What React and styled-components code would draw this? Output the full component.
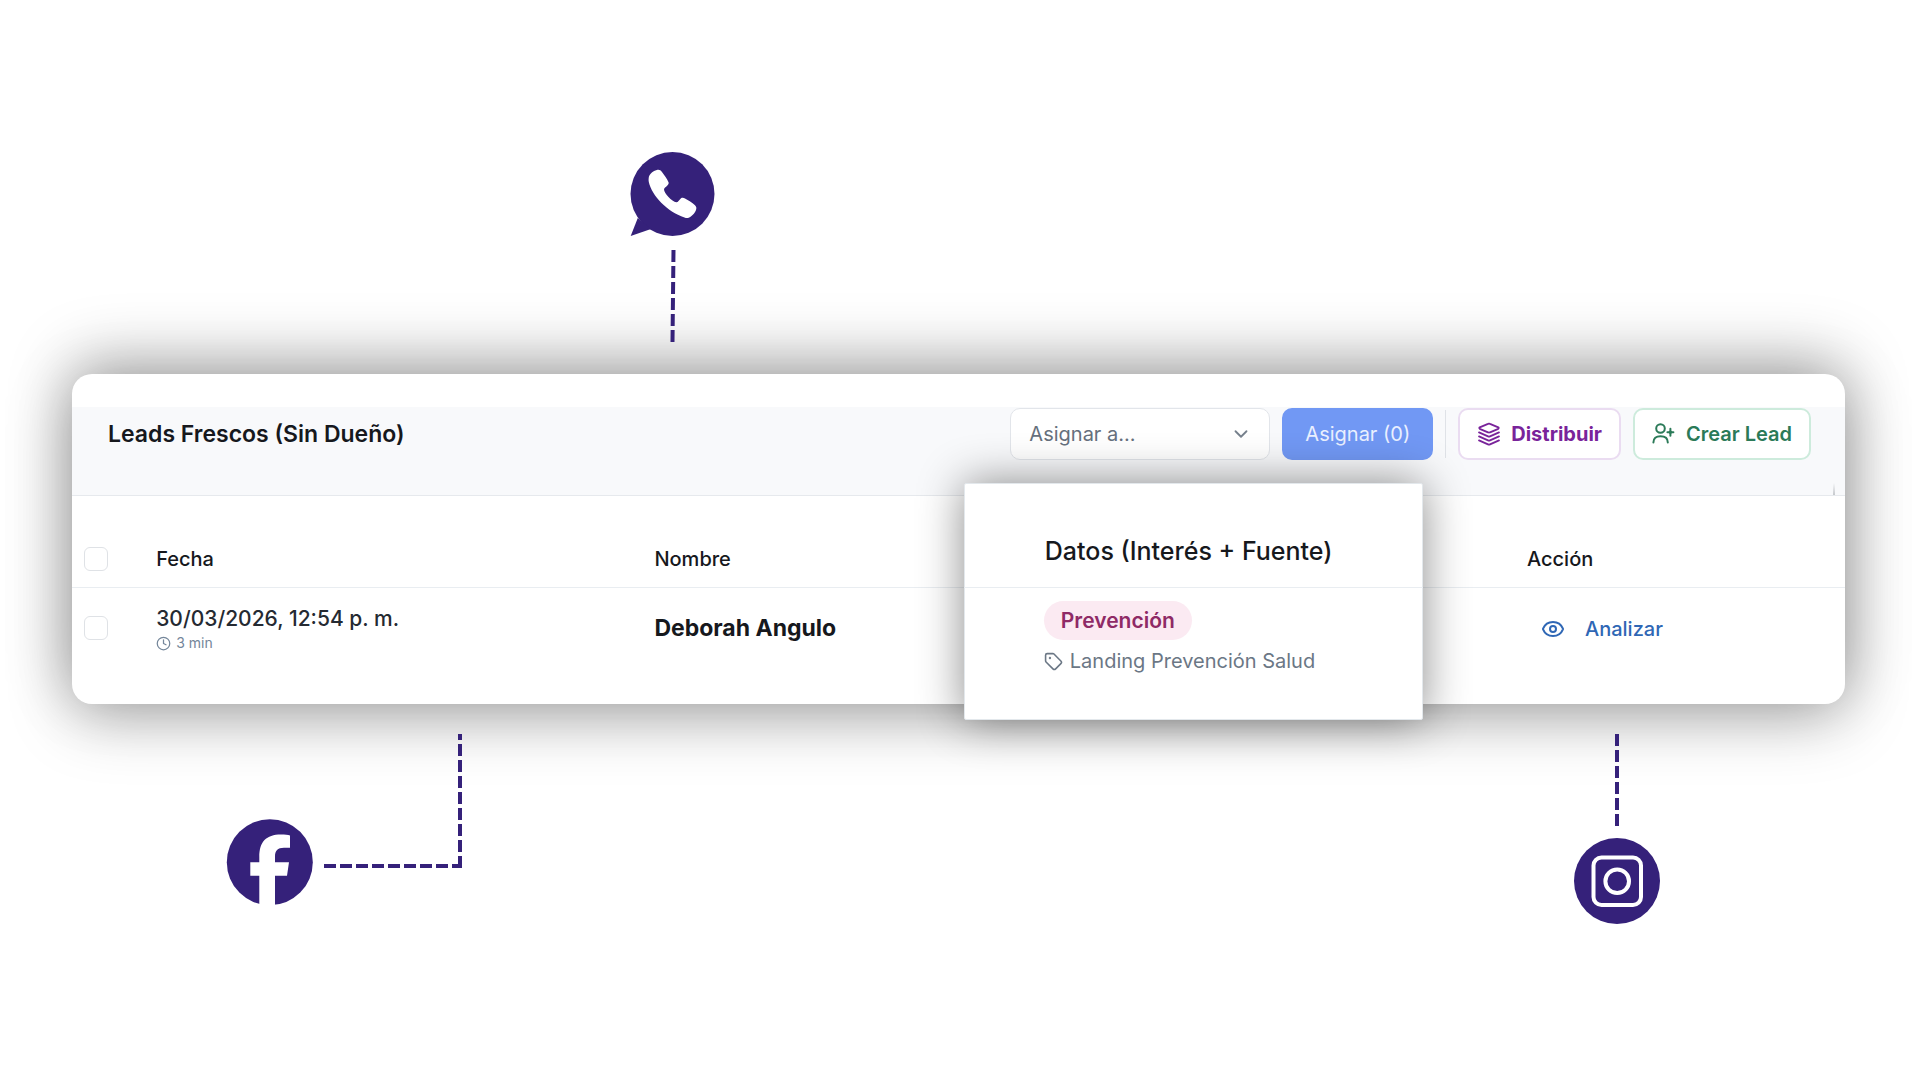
import React, { useState } from 'react';
import styled, { createGlobalStyle } from 'styled-components';
import { ChevronDown, Clock, Eye, Tag } from 'lucide-react';

const GlobalStyle = createGlobalStyle`
  * {
    box-sizing: border-box;
  }
  body {
    margin: 0;
    background: #fff;
    color: #16181d;
    font-family: Inter, 'Liberation Sans', sans-serif;
  }
`;

const brand = '#35217a';

const Page = styled.main`
  padding: 152px 75px 0 72px;
`;

const TopChannel = styled.div`
  display: flex;
  flex-direction: column;
  gap: 14px;
  width: 86px;
  margin: 0 0 32px 31.5%;
  align-items: center;
`;

const BottomChannels = styled.div`
  display: flex;
  justify-content: space-between;
  align-items: flex-start;
  padding: 30px 10.45% 0 8.7%;
`;

const FacebookChannel = styled.div`
  display: flex;
  align-items: flex-end;
  gap: 11px;

  svg:first-child {
    margin-top: 85px;
  }
  svg:last-child {
    align-self: flex-start;
  }
`;

const InstagramChannel = styled.div`
  display: flex;
  flex-direction: column;
  align-items: center;
  gap: 12px;
`;

const Drawing = styled.svg`
  display: block;
  flex: none;
`;

const Dash = styled.path`
  fill: none;
  stroke: ${brand};
  stroke-width: 4;
  stroke-dasharray: 12 4;
`;

const Card = styled.section`
  background: #fff;
  border-radius: 20px;
  padding-top: 33px;
  box-shadow:
    0 14px 64px rgba(0, 0, 0, 0.28),
    0 -14px 64px rgba(0, 0, 0, 0.28);
`;

const Toolbar = styled.header`
  position: relative;
  display: flex;
  align-items: flex-start;
  justify-content: space-between;
  padding: 1px 34px 35px 36px;
  background: #f8f9fb;
  border-bottom: 1px solid #e6e9ed;

  &::after {
    content: '';
    position: absolute;
    right: 10px;
    bottom: 0;
    width: 2px;
    height: 12px;
    background: linear-gradient(transparent, #c5c8cc);
  }
`;

const Title = styled.h1`
  margin: 0;
  font-size: 23px;
  font-weight: 600;
  line-height: 52px;
`;

const Actions = styled.div`
  display: flex;
  align-items: center;
  gap: 12px;
`;

const SelectBox = styled.label`
  position: relative;
  display: block;
  width: 260px;

  svg {
    position: absolute;
    right: 18px;
    top: 15px;
    color: #76808c;
    pointer-events: none;
  }
`;

const Select = styled.select`
  appearance: none;
  width: 100%;
  height: 52px;
  padding: 0 18px;
  border: 1px solid #e2e5ea;
  border-radius: 10px;
  background: #fff;
  color: #66707d;
  font: 400 20px Inter, sans-serif;
`;

const Button = styled.button`
  display: flex;
  align-items: center;
  justify-content: center;
  gap: 10px;
  height: 52px;
  padding: 0 17px;
  border: 2px solid ${(p) => p.$border};
  border-radius: 10px;
  background: #fff;
  color: ${(p) => p.$color};
  font: ${(p) => p.$weight || 600} 20px Inter, sans-serif;
  white-space: nowrap;
`;

const PrimaryButton = styled(Button)`
  padding: 0 21px;
  border-color: #7198f4;
  background: #7198f4;
  color: #eaf0ff;
`;

const Divider = styled.span`
  width: 1px;
  height: 48px;
  background: #dfe2e7;
`;

const Table = styled.table`
  width: 100%;
  table-layout: fixed;
  border-collapse: separate;
  border-spacing: 0;
`;

const Col = styled.col`
  width: ${(p) => p.$width};
`;

const Th = styled.th`
  height: 92px;
  padding: 0 0 16px;
  border-bottom: 1px solid #e9edf1;
  vertical-align: bottom;
  text-align: left;
  font-size: 20px;
  font-weight: 500;
  line-height: 24px;
`;

// raised panel behind the whole "Datos" column
const DataTh = styled(Th)`
  position: relative;
  z-index: 1;
  padding: 0 0 22px 81px;
  font-size: 25px;
  line-height: 28px;
  white-space: nowrap;

  &::before {
    content: '';
    position: absolute;
    inset: -13px 0 auto 0;
    height: 235px;
    z-index: -1;
    background: #fff;
    border: 1px solid #e3e8ec;
    border-radius: 2px;
    box-shadow: 0 0 46px rgba(0, 0, 0, 0.46);
  }

  &::after {
    content: '';
    position: absolute;
    inset: auto 0 -1px 0;
    height: 1px;
    background: #e9edf1;
  }
`;

const ActionTh = styled(Th)`
  padding-left: 104px;
`;

const Td = styled.td`
  height: 116px;
  padding: ${(p) => p.$top}px 0 0;
  vertical-align: top;
  font-size: 20px;
  line-height: 28px;
`;

const DataTd = styled(Td)`
  position: relative;
  z-index: 2;
  padding-left: 80px;
`;

const ActionTd = styled(Td)`
  padding-left: 118px;
`;

const Checkbox = styled.input`
  appearance: none;
  display: block;
  width: 24px;
  height: 24px;
  margin: 0 0 0 12px;
  border: 1px solid #dfe2e6;
  border-radius: 6px;
  background: #fff;
`;

const DateText = styled.div`
  font-size: 21px;
  font-weight: 500;
  color: #252a32;
`;

const Age = styled.div`
  display: flex;
  align-items: center;
  gap: 5px;
  font-size: 14px;
  line-height: 20px;
  color: #74869a;
`;

const Name = styled.strong`
  font-size: 23px;
  font-weight: 700;
`;

const Badge = styled.span`
  display: block;
  width: fit-content;
  padding: 0 17px;
  border-radius: 20px;
  background: #fbeaf2;
  color: #8f2a66;
  font-size: 21px;
  font-weight: 600;
  line-height: 39px;
`;

const Source = styled.div`
  display: flex;
  align-items: center;
  gap: 7px;
  margin-top: 7px;
  color: #6b7785;
  white-space: nowrap;
`;

const ActionLink = styled.a`
  display: flex;
  align-items: center;
  gap: 20px;
  color: #2f67b5;
  font-weight: 500;
  text-decoration: none;
`;

const StackIcon = () => (
  <Drawing width="24" height="24" viewBox="0 0 24 24" fill="none" stroke="currentColor" strokeWidth="1.8" strokeLinecap="round" strokeLinejoin="round">
    <path d="M11 1.9a2.4 2.4 0 0 1 2 0l8.3 3.5a.8.8 0 0 1 0 1.4L13 10.3a2.4 2.4 0 0 1-2 0L2.7 6.8a.8.8 0 0 1 0-1.4Z" />
    <path d="m2 10.4 9 4a2.4 2.4 0 0 0 2 0l9-4M2 14.4l9 4a2.4 2.4 0 0 0 2 0l9-4M2 18.4l9 4a2.4 2.4 0 0 0 2 0l9-4" />
  </Drawing>
);

const UserAddIcon = () => (
  <Drawing width="24" height="24" viewBox="0 0 24 24" fill="none" stroke="currentColor" strokeWidth="2" strokeLinecap="round">
    <circle cx="8.5" cy="6.5" r="4.3" />
    <path d="M1.4 20.5C1.4 16.3 4 14.2 8.5 14.2s7.3 2.1 7.3 6.3M18.4 6.8v7M15.4 10.3h6" />
    <path d="m18.4 8 2.2 2.3-2.2 2.3-2.2-2.3Z" fill="currentColor" stroke="none" />
  </Drawing>
);

const WhatsappLogo = () => (
  <Drawing width="86" height="84" viewBox="0 0 86 84" role="img" aria-label="WhatsApp">
    <circle cx="42.5" cy="42" r="42" fill={brand} />
    <path d="M.7 84 7.8 66 21 77Z" fill={brand} />
    <path
      d="M18.7 26C19 22 24 18.5 27.5 17.8c2-.3 3.3.4 4.3 2 2.7 3.7 5.2 7.2 6.6 10.2.6 1.2.2 2-.6 3-1.3 1.6-3.8 2.8-3.8 4.5C34 41 42 49.8 46.3 50.3c1.7.1 3.2-2.8 4.7-4.1 1.3-.8 2.8-.5 4 .2 3.5 1.8 7 4.1 10 6.8 1.6 1.6 1.6 3.1 1 4.8-1.2 3.5-4.5 6.8-8 7.9-1.2.3-2.2.1-3.5-.4C37 59.5 22 44 18.8 30c-.3-1.5-.3-2.7-.1-4Z"
      fill="#fff"
    />
  </Drawing>
);

const FacebookLogo = () => (
  <Drawing width="87" height="87" viewBox="0 0 87 87" role="img" aria-label="Facebook">
    <circle cx="43.8" cy="43.2" r="43" fill={brand} />
    <path
      d="M33.3 87V56.7H24.3V43.3H33.3V38C33.3 23 40 15.6 55 15.6c4 0 7 .4 9 1V28.7H58C51.5 28.7 49 32 49 37.5V43.3H63L61 56.7H49V87Z"
      fill="#fff"
    />
  </Drawing>
);

const InstagramLogo = () => (
  <Drawing width="86" height="86" viewBox="0 0 86 86" role="img" aria-label="Instagram">
    <circle cx="43" cy="43" r="43" fill={brand} />
    <g fill="none" stroke="#fff" strokeWidth="4">
      <rect x="19.5" y="19.5" width="47.5" height="47.5" rx="8" />
      <circle cx="43.2" cy="43.3" r="11.8" />
    </g>
  </Drawing>
);

const leads = [
  {
    date: '30/03/2026, 12:54 p. m.',
    age: '3 min',
    name: 'Deborah Angulo',
    interest: 'Prevención',
    source: 'Landing Prevención Salud',
  },
];

const App = () => {
  const [selected, setSelected] = useState([]);
  const allSelected = selected.length === leads.length;

  const toggle = (name) => {
    setSelected(selected.includes(name) ? selected.filter((n) => n !== name) : [...selected, name]);
  };

  return (
    <>
      <GlobalStyle />
      <Page>
        <TopChannel>
          <WhatsappLogo />
          <Drawing width="6" height="92">
            <Dash d="M3.5 0 2.5 92" />
          </Drawing>
        </TopChannel>

        <Card>
          <Toolbar>
            <Title>Leads Frescos (Sin Dueño)</Title>
            <Actions>
              <SelectBox>
                <Select aria-label="Asignar a" defaultValue="">
                  <option value="">Asignar a...</option>
                </Select>
                <ChevronDown size={22} />
              </SelectBox>
              <PrimaryButton $weight={400}>Asignar ({selected.length})</PrimaryButton>
              <Divider />
              <Button $border="#eadcf1" $color="#79239a" $weight={700}>
                <StackIcon />
                Distribuir
              </Button>
              <Button $border="#cdebdc" $color="#2b7a58">
                <UserAddIcon />
                Crear Lead
              </Button>
            </Actions>
          </Toolbar>

          <Table>
            <colgroup>
              <Col $width="4.75%" />
              <Col $width="28.1%" />
              <Col $width="17.45%" />
              <Col $width="25.9%" />
              <Col />
            </colgroup>
            <thead>
              <tr>
                <Th>
                  <Checkbox
                    type="checkbox"
                    aria-label="Seleccionar todos"
                    checked={allSelected}
                    onChange={() => setSelected(allSelected ? [] : leads.map((l) => l.name))}
                  />
                </Th>
                <Th>Fecha</Th>
                <Th>Nombre</Th>
                <DataTh>Datos (Interés + Fuente)</DataTh>
                <ActionTh>Acción</ActionTh>
              </tr>
            </thead>
            <tbody>
              {leads.map((lead) => (
                <tr key={lead.name}>
                  <Td $top={28}>
                    <Checkbox
                      type="checkbox"
                      aria-label={lead.name}
                      checked={selected.includes(lead.name)}
                      onChange={() => toggle(lead.name)}
                    />
                  </Td>
                  <Td $top={17}>
                    <DateText>{lead.date}</DateText>
                    <Age>
                      <Clock size={15} />
                      {lead.age}
                    </Age>
                  </Td>
                  <Td $top={26}>
                    <Name>{lead.name}</Name>
                  </Td>
                  <DataTd $top={13}>
                    <Badge>{lead.interest}</Badge>
                    <Source>
                      <Tag size={19} />
                      {lead.source}
                    </Source>
                  </DataTd>
                  <ActionTd $top={27}>
                    <ActionLink href="#analizar">
                      <Eye size={24} />
                      Analizar
                    </ActionLink>
                  </ActionTd>
                </tr>
              ))}
            </tbody>
          </Table>
        </Card>

        <BottomChannels>
          <FacebookChannel>
            <FacebookLogo />
            <Drawing width="139" height="134">
              <Dash d="M0 132H137" />
              <Dash d="M136 134V0" />
            </Drawing>
          </FacebookChannel>
          <InstagramChannel>
            <Drawing width="4" height="92">
              <Dash d="M2 0V92" />
            </Drawing>
            <InstagramLogo />
          </InstagramChannel>
        </BottomChannels>
      </Page>
    </>
  );
};

export default App;
